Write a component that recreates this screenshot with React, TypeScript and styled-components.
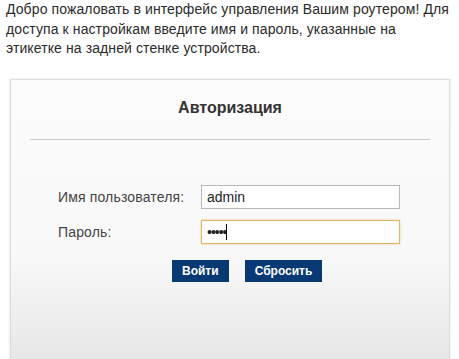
import React from "react";
import styled, { createGlobalStyle } from "styled-components";

const GlobalStyle = createGlobalStyle`
  html, body {
    margin: 0;
    padding: 0;
    background: #ffffff;
    overflow: hidden;
  }

  body {
    font-family: "Liberation Sans", Arial, sans-serif;
  }
`;

const Page = styled.div`
  width: 459px;
  height: 359px;
  overflow: hidden;
`;

const Intro = styled.p`
  margin: 0;
  padding: 0 6px;
  width: 447px;
  font-size: 14px;
  letter-spacing: 0.1px;
  line-height: 19.5px;
  color: #2b2b2b;
`;

const Panel = styled.section`
  margin: 20px 0 0 10px;
  width: 440px;
  height: 300px;
  padding: 0 19px;
  box-sizing: border-box;
  border: 1px solid #dcdcdc;
  box-shadow: 0 0 3px rgba(0, 0, 0, 0.12);
  background: linear-gradient(to bottom, #fcfcfc 0%, #f8f8f8 60%, #e4e4e4 100%);
`;

const Title = styled.h2`
  margin: 0;
  padding: 19px 0 0;
  height: 40px;
  box-sizing: border-box;
  text-align: center;
  font-size: 16px;
  font-weight: 700;
  color: #333333;
`;

const Divider = styled.hr`
  margin: 19px 0 0;
  border: 0;
  border-top: 1px solid #c9c9c9;
`;

const Form = styled.form`
  display: grid;
  grid-template-columns: 143px 199px;
  row-gap: 11px;
  align-items: center;
  padding: 45px 0 0 28px;
`;

const Label = styled.label`
  font-size: 14px;
  letter-spacing: 0.15px;
  color: #444444;
`;

const Field = styled.div`
  position: relative;
`;

const Input = styled.input<{ $focused?: boolean }>`
  display: block;
  width: 199px;
  height: 24px;
  box-sizing: border-box;
  margin: 0;
  padding: 0 5px;
  font-family: "Liberation Sans", Arial, sans-serif;
  font-size: 14px;
  color: #222222;
  background: #ffffff;
  border: 1px solid ${(p) => (p.$focused ? "#e2b563" : "#b8b8b8")};
  box-shadow: ${(p) => (p.$focused ? "0 0 2px rgba(226, 170, 80, 0.6)" : "none")};
  outline: none;
  letter-spacing: ${(p) => (p.$focused ? "-1px" : "0")};
`;

const Caret = styled.span`
  position: absolute;
  left: 25px;
  top: 4px;
  width: 1px;
  height: 16px;
  background: #000000;
`;

const Buttons = styled.div`
  display: flex;
  gap: 16px;
  padding: 16px 0 0 142px;
`;

const Button = styled.button`
  height: 22px;
  margin: 0;
  padding: 0 10px;
  border: 0;
  background: #073a74;
  color: #ffffff;
  font-family: "Liberation Sans", Arial, sans-serif;
  font-size: 12px;
  font-weight: 700;
  cursor: pointer;
`;

export default function App() {
  return (
    <Page>
      <GlobalStyle />
      <Intro>
        Добро пожаловать в интерфейс управления Вашим роутером! Для доступа к
        настройкам введите имя и пароль, указанные на этикетке на задней стенке
        устройства.
      </Intro>
      <Panel>
        <Title>Авторизация</Title>
        <Divider />
        <Form onSubmit={(e) => e.preventDefault()}>
          <Label>Имя пользователя:</Label>
          <Field>
            <Input type="text" defaultValue="admin" />
          </Field>
          <Label>Пароль:</Label>
          <Field>
            <Input $focused type="password" defaultValue="admin" />
            <Caret />
          </Field>
        </Form>
        <Buttons>
          <Button type="button">Войти</Button>
          <Button type="button">Сбросить</Button>
        </Buttons>
      </Panel>
    </Page>
  );
}
